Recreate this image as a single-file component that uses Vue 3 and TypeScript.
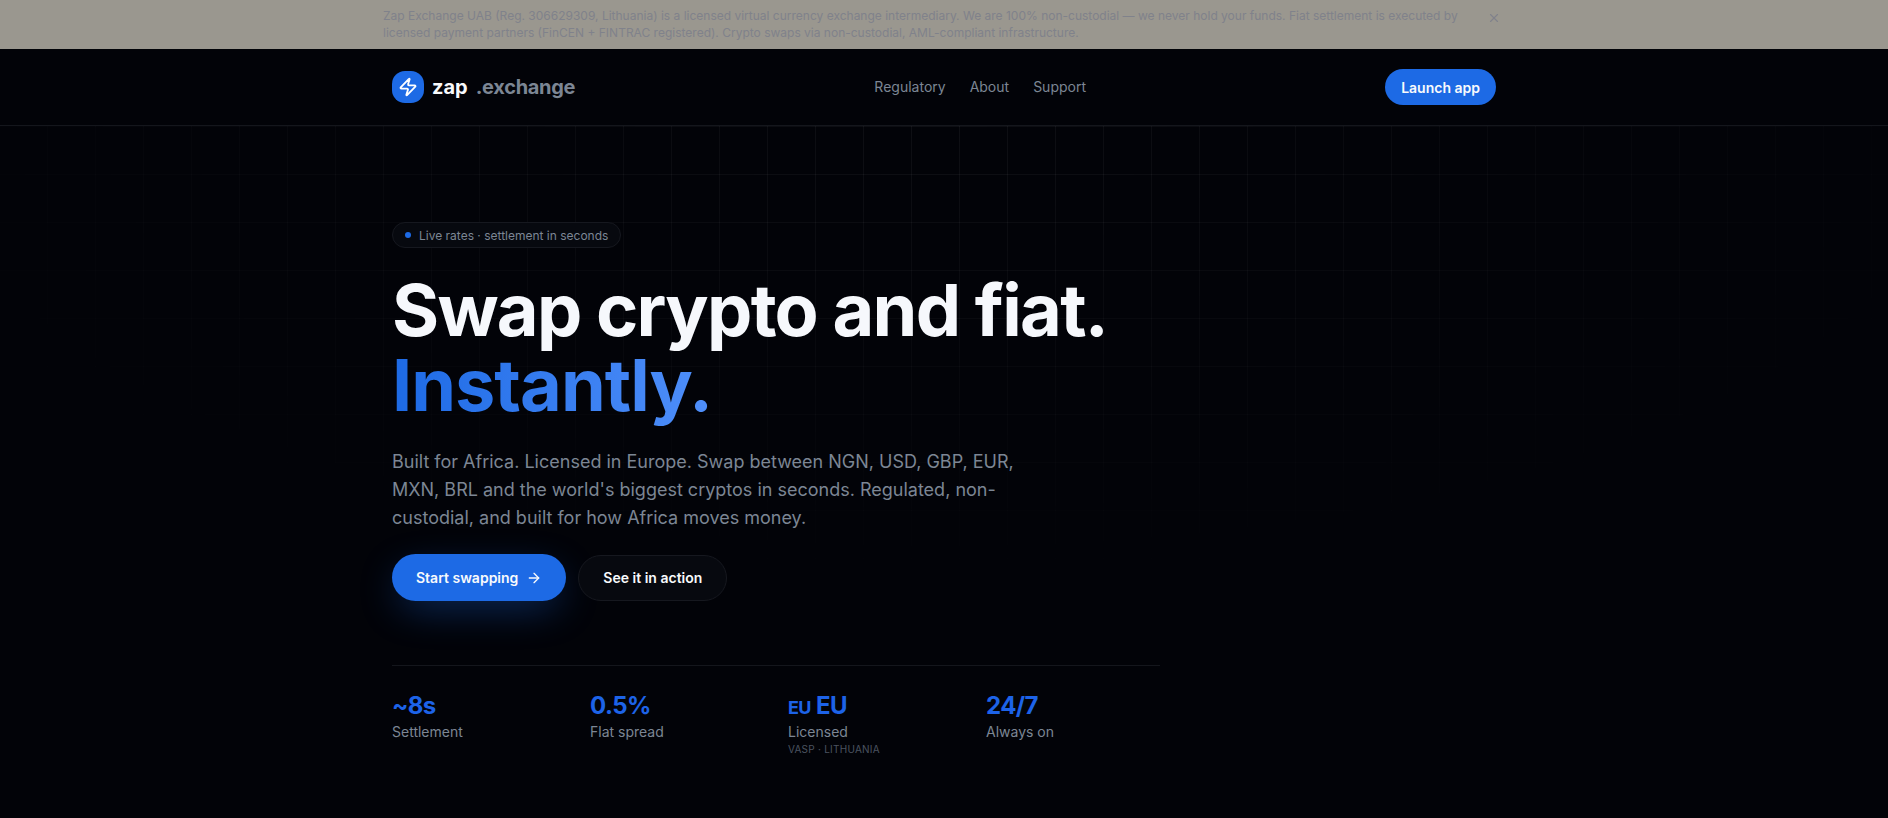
<script setup lang="ts">
const navLinks = ["Regulatory", "About", "Support"];

const stats = [
  { value: "~8s", label: "Settlement" },
  { value: "0.5%", label: "Flat spread" },
  { value: "EU", flag: "EU", label: "Licensed", note: "VASP · Lithuania" },
  { value: "24/7", label: "Always on" },
];
</script>

<template>
  <div class="page">
    <div class="notice">
      <div class="notice-inner">
        <p>
          Zap Exchange UAB (Reg. 306629309, Lithuania) is a licensed virtual currency exchange intermediary. We are 100% non-custodial — we never hold your funds. Fiat settlement is executed by licensed payment partners (FinCEN + FINTRAC registered). Crypto swaps via non-custodial, AML-compliant infrastructure.
        </p>
        <button class="notice-close" aria-label="Dismiss">
          <svg width="14" height="14" viewBox="0 0 24 24" fill="none" stroke="currentColor" stroke-width="2" stroke-linecap="round" stroke-linejoin="round">
            <path d="M18 6 6 18" />
            <path d="m6 6 12 12" />
          </svg>
        </button>
      </div>
    </div>

    <header class="header">
      <div class="header-inner">
        <a class="logo">
          <span class="logo-mark">
            <svg width="20" height="20" viewBox="0 0 24 24" fill="none" stroke="#fff" stroke-width="2.2" stroke-linecap="round" stroke-linejoin="round">
              <path d="M4 14a1 1 0 0 1-.78-1.63l9.9-10.2a.5.5 0 0 1 .86.46l-1.92 6.02A1 1 0 0 0 13 10h7a1 1 0 0 1 .78 1.63l-9.9 10.2a.5.5 0 0 1-.86-.46l1.92-6.02A1 1 0 0 0 11 14z" />
            </svg>
          </span>
          <span class="logo-name">zap</span>
          <span class="logo-tld">.exchange</span>
        </a>
        <nav class="nav">
          <a v-for="link in navLinks" :key="link">{{ link }}</a>
        </nav>
        <button class="launch">Launch app</button>
      </div>
    </header>

    <main class="hero">
      <div class="grid-bg"></div>
      <div class="hero-inner">
        <div class="badge"><span class="dot"></span>Live rates · settlement in seconds</div>
        <h1>
          Swap crypto and fiat.<br />
          <span class="accent">Instantly.</span>
        </h1>
        <p class="lead">
          Built for Africa. Licensed in Europe. Swap between NGN, USD, GBP, EUR, MXN, BRL and the world's biggest cryptos in seconds. Regulated, non-custodial, and built for how Africa moves money.
        </p>
        <div class="actions">
          <button class="btn-primary">
            Start swapping
            <svg width="16" height="16" viewBox="0 0 24 24" fill="none" stroke="currentColor" stroke-width="2" stroke-linecap="round" stroke-linejoin="round">
              <path d="M5 12h14" />
              <path d="m12 5 7 7-7 7" />
            </svg>
          </button>
          <button class="btn-ghost">See it in action</button>
        </div>
        <div class="stats">
          <div v-for="stat in stats" :key="stat.label" class="stat">
            <div class="stat-value"><span v-if="stat.flag" class="flag">{{ stat.flag }}</span>{{ stat.value }}</div>
            <div class="stat-label">{{ stat.label }}</div>
            <div v-if="stat.note" class="stat-note">{{ stat.note }}</div>
          </div>
        </div>
      </div>
    </main>
  </div>
</template>

<style>
html,
body {
  margin: 0;
  background: #020308;
}
</style>

<style scoped>
.page {
  min-height: 818px;
  background: #020308;
  font-family: Inter, "Noto Sans", sans-serif;
  overflow: hidden;
}

.notice {
  height: 49px;
  background: #9a978f;
  color: #80828b;
}

.notice-inner {
  width: 1122px;
  margin: 0 auto;
  display: flex;
  align-items: flex-start;
  gap: 15px;
  padding: 7px 0 0;
}

.notice p {
  margin: 0;
  flex: 1;
  font-size: 12px;
  line-height: 17px;
}

.notice-close {
  border: 0;
  padding: 4px;
  background: none;
  color: inherit;
  display: flex;
}

.header {
  height: 76px;
  border-bottom: 1px solid #14161c;
}

.header-inner {
  width: 1104px;
  height: 76px;
  margin: 0 auto;
  display: flex;
  justify-content: space-between;
  align-items: center;
}

.logo {
  display: flex;
  align-items: center;
  font-size: 20px;
  font-weight: 700;
}

.logo-mark {
  width: 32px;
  height: 32px;
  border-radius: 13px;
  background: #1d6ae5;
  display: flex;
  align-items: center;
  justify-content: center;
  margin-right: 8px;
}

.logo-name {
  color: #f8fafc;
  margin-right: 8px;
}

.logo-tld {
  color: #7c8694;
  letter-spacing: -0.3px;
}

.nav {
  display: flex;
  gap: 24px;
  font-size: 14px;
  line-height: 20px;
  color: #7c8694;
  margin-top: -1px;
}

.launch {
  height: 36px;
  padding: 0 16px;
  border: 0;
  border-radius: 18px;
  background: #1d6ae5;
  color: #f8fafc;
  font: 600 14px Inter, sans-serif;
}

.hero {
  position: relative;
  height: 692px;
}

.grid-bg {
  position: absolute;
  inset: 0;
  background-image:
    linear-gradient(to right, rgba(255, 255, 255, 0.05) 1px, transparent 1px),
    linear-gradient(to bottom, rgba(255, 255, 255, 0.05) 1px, transparent 1px);
  background-size: 48px 48px;
  background-position: -1px 0;
  -webkit-mask-image: radial-gradient(ellipse 1150px 475px at 50% 0, #000 0%, transparent 100%);
  mask-image: radial-gradient(ellipse 1150px 475px at 50% 0, #000 0%, transparent 100%);
}

.hero-inner {
  position: relative;
  width: 1104px;
  margin: 0 auto;
  padding-top: 96px;
}

.badge {
  display: inline-flex;
  align-items: center;
  gap: 8px;
  height: 24px;
  padding: 0 12px;
  border: 1px solid #16181f;
  border-radius: 13px;
  background: #07090f;
  color: #7c8694;
  font-size: 12px;
}

.dot {
  width: 6px;
  height: 6px;
  border-radius: 50%;
  background: #1d6ae5;
}

h1 {
  margin: 24px 0 0;
  font-size: 72px;
  line-height: 75px;
  font-weight: 700;
  letter-spacing: -1.7px;
  color: #f6f8fc;
}

.accent {
  letter-spacing: -1px;
  background: linear-gradient(90deg, #1d6ae5, #4f8ffa);
  -webkit-background-clip: text;
  background-clip: text;
  color: transparent;
}

.lead {
  margin: 26px 0 0;
  width: 640px;
  font-size: 18px;
  line-height: 28px;
  color: #7c8694;
}

.actions {
  display: flex;
  align-items: center;
  gap: 12px;
  margin-top: 22px;
}

.actions button {
  display: inline-flex;
  align-items: center;
  gap: 8px;
  border-radius: 24px;
  font: 600 14px Inter, sans-serif;
  color: #f8fafc;
}

.btn-primary {
  height: 47px;
  padding: 0 24px;
  border: 0;
  background: #1d6ae5;
  box-shadow: 0 12px 40px -8px rgba(29, 106, 229, 0.45);
}

.btn-ghost {
  height: 46px;
  padding: 0 24px;
  border: 1px solid #16181f;
  background: #07090f;
}

.stats {
  width: 768px;
  margin-top: 64px;
  padding-top: 24px;
  border-top: 1px solid #14161c;
  display: grid;
  grid-template-columns: repeat(4, 1fr);
  gap: 24px;
}

.stat-value {
  height: 32px;
  font-size: 24px;
  line-height: 32px;
  font-weight: 700;
  letter-spacing: -0.6px;
  color: #1d63e8;
}

.flag {
  font-size: 18px;
  line-height: 1;
  margin-right: 5px;
}

.stat-label {
  font-size: 14px;
  line-height: 20px;
  color: #7c8694;
}

.stat-note {
  margin-top: 1px;
  font-size: 10px;
  line-height: 12px;
  letter-spacing: 0.25px;
  text-transform: uppercase;
  color: #4b5360;
}
</style>
